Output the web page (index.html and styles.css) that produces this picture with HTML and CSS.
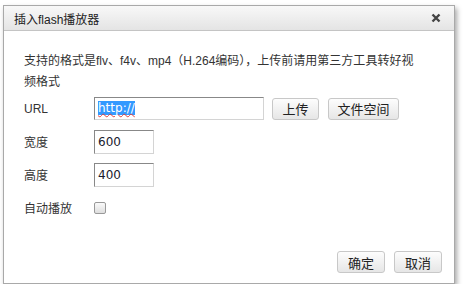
FILE: index.html
```html
<!DOCTYPE html>
<html lang="zh">
<head>
    <meta charset="UTF-8">
    <title>插入flash播放器</title>
    <link rel="stylesheet" href="styles.css">
</head>
<body>
    <div class="dialog">
        <div class="dialog-head">
            <span class="dialog-title">插入flash播放器</span>
            <svg class="close" width="10" height="10" viewBox="0 0 10 10">
                <path d="M1.5 1.5 L8.5 8.5 M8.5 1.5 L1.5 8.5" stroke="#444" stroke-width="2.4"/>
            </svg>
        </div>
        <div class="dialog-body">
            <p class="tip">支持的格式是flv、f4v、mp4（H.264编码），上传前请用第三方工具转好视频格式</p>
            <div class="row">
                <label class="label">URL</label>
                <div class="input url"><span class="selected">http://</span></div>
                <button class="btn btn-upload">上传</button>
                <button class="btn btn-space">文件空间</button>
            </div>
            <div class="row">
                <label class="label">宽度</label>
                <div class="input small">600</div>
            </div>
            <div class="row">
                <label class="label">高度</label>
                <div class="input small">400</div>
            </div>
            <div class="row">
                <label class="label">自动播放</label>
                <span class="check"></span>
            </div>
        </div>
        <div class="dialog-foot">
            <button class="btn">确定</button>
            <button class="btn">取消</button>
        </div>
    </div>
</body>
</html>
```

FILE: styles.css
```css
body {
    margin: 0;
    padding: 5px 0 0 3px;
    font-family: "Liberation Sans", "Noto Sans CJK SC", sans-serif;
    font-size: 12px;
    color: #333;
    background: #fff;
}

.dialog {
    width: 450px;
    height: 277px;
    border: 1px solid #a9a9a9;
    background: #fff;
    box-shadow: 2px 3px 5px rgba(0, 0, 0, 0.35);
    display: flex;
    flex-direction: column;
}

.dialog-head {
    height: 24px;
    border-bottom: 1px solid #c4c4c4;
    background: linear-gradient(#f8f8f8, #e4e4e4);
    display: flex;
    align-items: center;
    justify-content: space-between;
    padding: 0 13px 0 10px;
}

.dialog-title {
    font-size: 12px;
    color: #222;
}

.dialog-body {
    padding: 20px 20px 0 20px;
    flex: 1;
}

.tip {
    margin: 0 0 -1px;
    line-height: 21px;
    width: 398px;
}

.row {
    display: flex;
    align-items: center;
    height: 33px;
}

.label {
    width: 70px;
}

.input {
    height: 23px;
    box-sizing: border-box;
    border: 1px solid #d4d4d4;
    border-top-color: #888;
    border-left-color: #888;
    font-family: "DejaVu Sans", sans-serif;
    font-size: 12px;
    line-height: 21px;
    padding: 0 3px;
    color: #1a1a2e;
}

.url {
    width: 170px;
    margin-right: 8px;
}

.selected {
    background: #3399ff;
    color: #fff;
    text-decoration: underline wavy #e04040;
    text-decoration-thickness: 1px;
}

.small {
    width: 60px;
    height: 24px;
    line-height: 22px;
}

.btn {
    height: 22px;
    padding: 0;
    margin-right: 9px;
    border: 1px solid #c8c8c8;
    border-radius: 3px;
    background: linear-gradient(#fdfdfd, #e6e6e6);
    font-family: "Noto Sans CJK SC", sans-serif;
    font-size: 13px;
    color: #222;
}

.btn-upload {
    width: 47px;
}

.btn-space {
    width: 71px;
}

.check {
    width: 10px;
    height: 10px;
    border: 1px solid #999;
    border-radius: 2px;
    background: linear-gradient(#fafafa, #dedede);
}

.dialog-foot {
    display: flex;
    justify-content: flex-end;
    padding: 0 3px 10px 0;
}

.dialog-foot .btn {
    width: 48px;
}
```
